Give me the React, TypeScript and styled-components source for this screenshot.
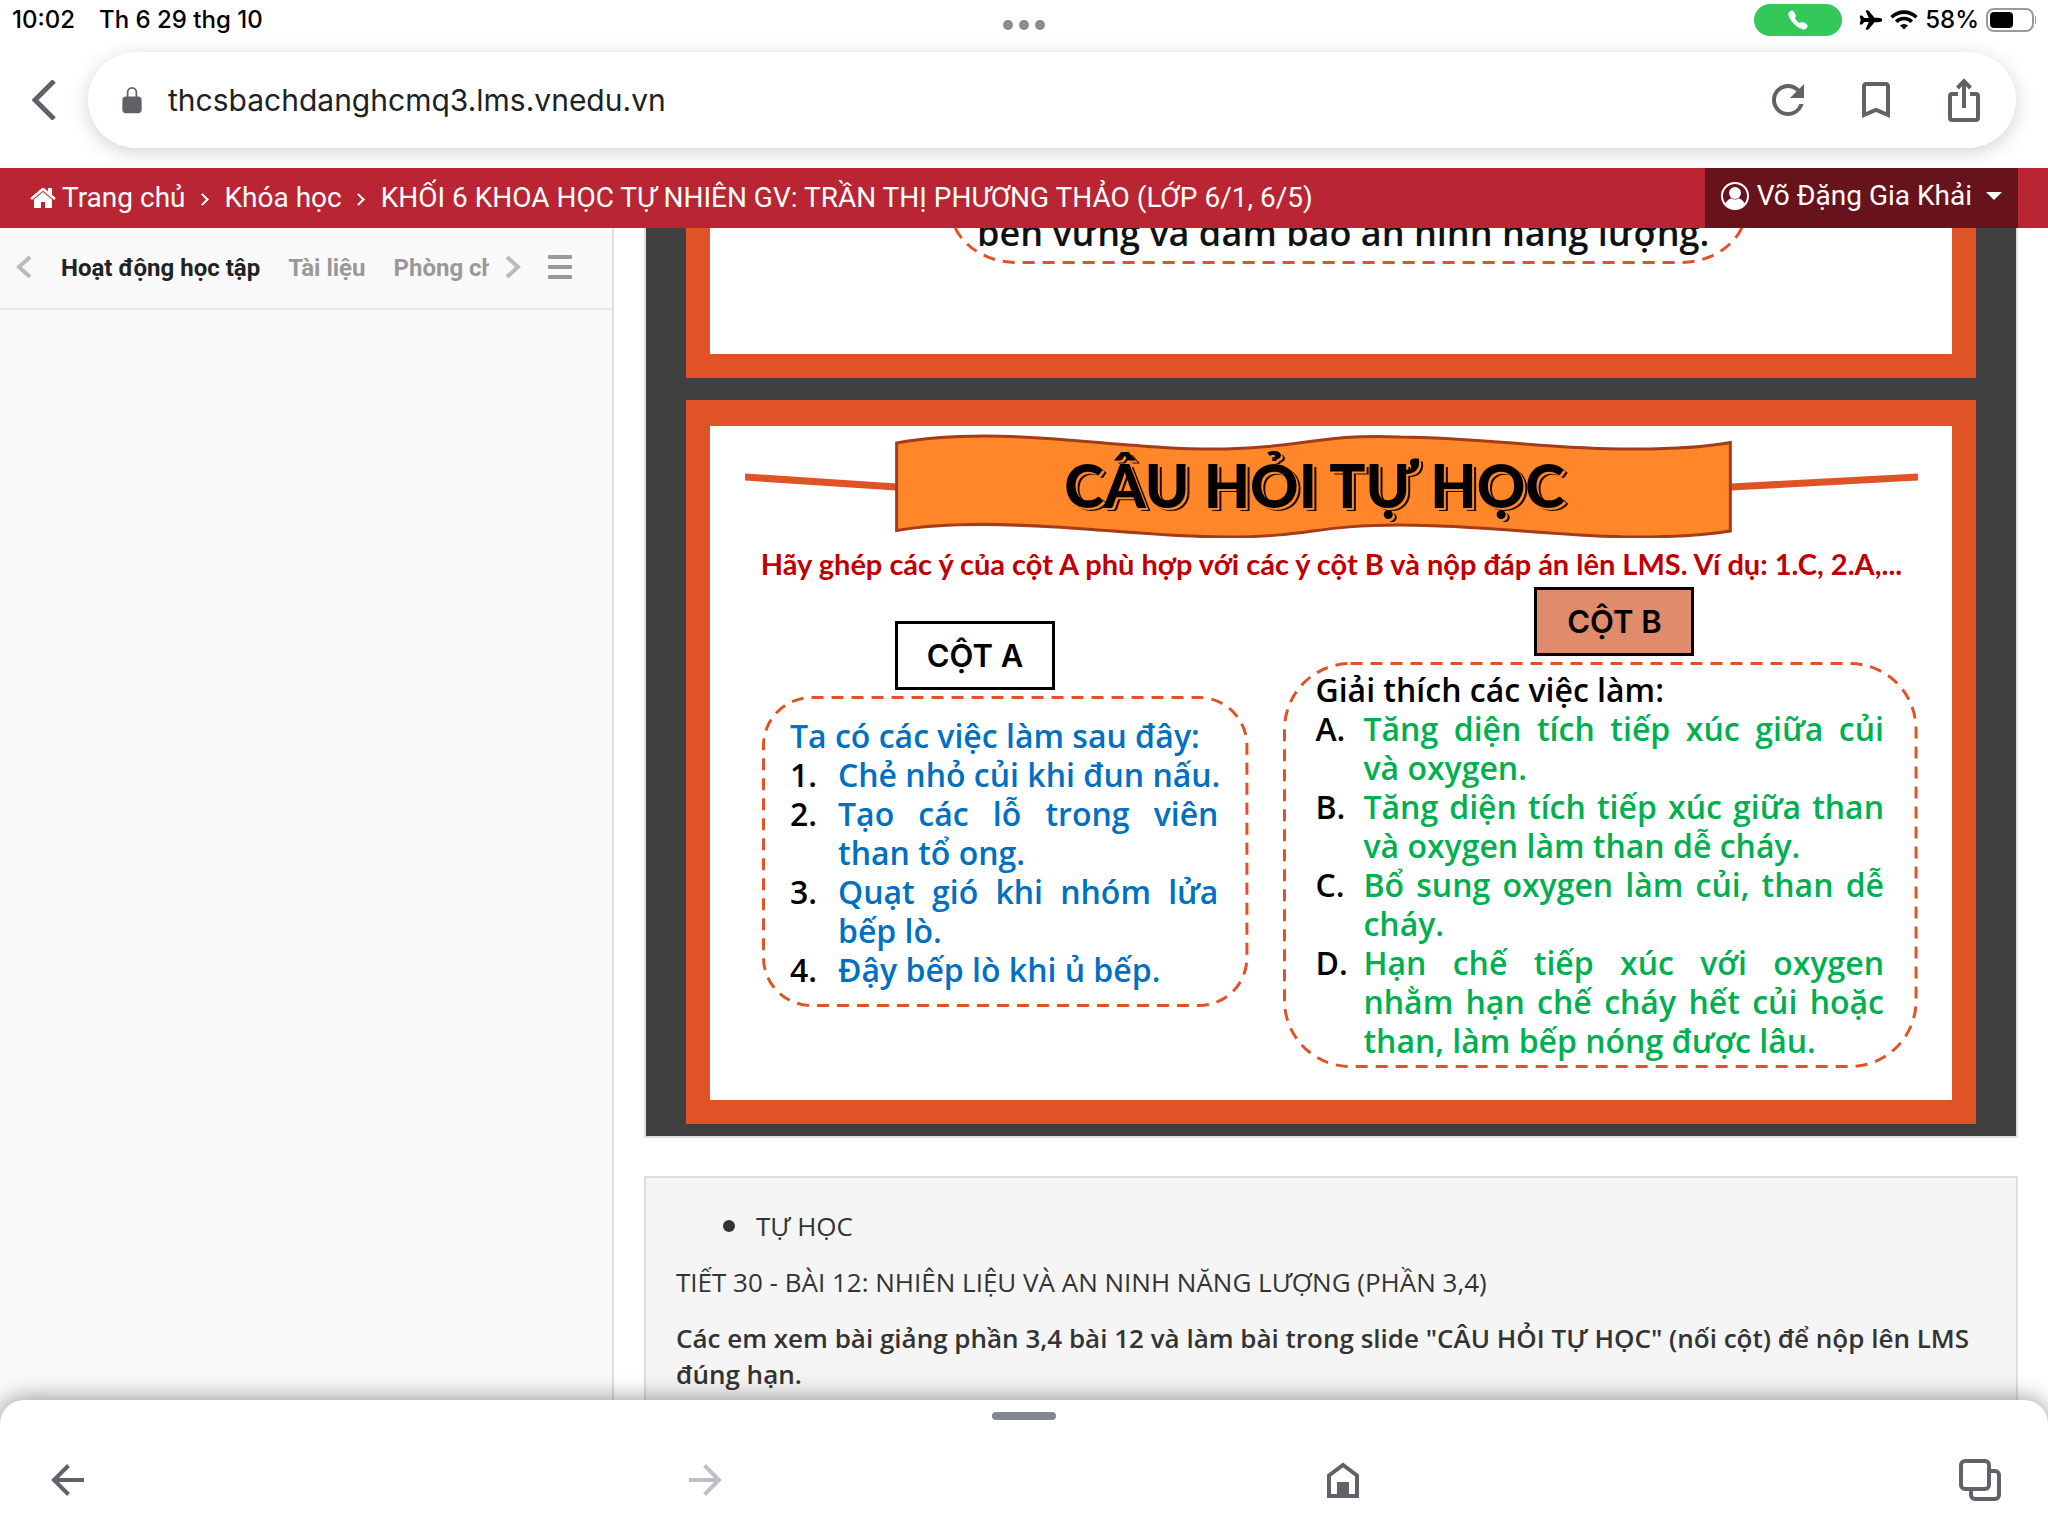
import React from "react";
import styled, { createGlobalStyle } from "styled-components";
import { IoAirplane, IoCall, IoLockClosed } from "react-icons/io5";
import { MdBookmarkBorder, MdRefresh } from "react-icons/md";

const ORANGE = "#e05326";
const SYSTEM_FONT = `Inter, "Liberation Sans", sans-serif`;
const DISPLAY_FONT = `Lato, "Open Sans", sans-serif`;
const TEXT_FONT = `"Open Sans", "Noto Sans", sans-serif`;

const GlobalStyle = createGlobalStyle`
  *, *::before, *::after { box-sizing: border-box; }
  body { margin: 0; background: #fff; font-family: Roboto, "Liberation Sans", sans-serif; }
  button { padding: 0; border: 0; background: none; font: inherit; color: inherit; cursor: pointer; }
  h2, p, ul, ol { margin: 0; padding: 0; }
  ul, ol { list-style: none; }
  svg { display: block; flex: none; }
`;

const Page = styled.div`
  display: flex;
  flex-direction: column;
  height: 100vh;
  overflow: hidden;
`;

/* ---------- status bar ---------- */

const StatusBar = styled.header`
  display: grid;
  grid-template-columns: 1fr auto 1fr;
  align-items: center;
  height: 40px;
  padding: 0 12px;
  font: 500 24px/40px ${SYSTEM_FONT};
  color: #000;
`;

const StatusLeft = styled.div`
  display: flex;
  gap: 24px;
`;

const Dots = styled.button`
  display: flex;
  gap: 6px;
  padding-top: 10px;
`;

const Dot = styled.span`
  width: 10px;
  height: 10px;
  border-radius: 50%;
  background: #8b8b8b;
`;

const StatusRight = styled.div`
  display: flex;
  align-items: center;
  justify-content: flex-end;
  gap: 7px;
`;

const CallPill = styled.span`
  display: grid;
  place-items: center;
  width: 88px;
  height: 32px;
  margin-right: 10px;
  border-radius: 16px;
  background: #34c759;
  color: #fff;
`;

/* ---------- browser toolbar ---------- */

const Toolbar = styled.div`
  display: flex;
  align-items: center;
  height: 128px;
  padding: 0 32px 8px 20px;
  color: #5f6368;
`;

const IconButton = styled.button`
  display: grid;
  place-items: center;
  width: 48px;
  height: 48px;
  color: ${(p: { $muted?: boolean }) => (p.$muted ? "#bdc1c6" : "#5f6368")};
`;

const Omnibox = styled.form`
  display: flex;
  flex: 1;
  align-items: center;
  gap: 22px;
  height: 96px;
  margin-left: 20px;
  padding: 0 28px 0 30px;
  border-radius: 48px;
  background: #fff;
  box-shadow: 0 4px 20px rgba(0, 0, 0, 0.18);
`;

const Address = styled.input`
  flex: 1;
  min-width: 0;
  padding: 0;
  border: 0;
  outline: 0;
  background: none;
  color: #202124;
  font: 400 30px/40px ${SYSTEM_FONT};
`;

const OmniboxActions = styled.div`
  display: flex;
  gap: 40px;
`;

/* ---------- site header ---------- */

const SiteHeader = styled.nav`
  position: relative;
  z-index: 1;
  display: flex;
  flex: none;
  justify-content: space-between;
  height: 60px;
  padding: 0 30px;
  background: #b92532;
  color: #fff;
  font-size: 28px;
  line-height: 58px;
`;

const Crumbs = styled.ol`
  display: flex;
  align-items: center;
`;

const Crumb = styled.li`
  display: flex;
  align-items: center;

  & + &::before {
    content: "";
    width: 9px;
    height: 9px;
    margin: 2px 18px 0 12px;
    border: solid #fff;
    border-width: 2px 2px 0 0;
    transform: rotate(45deg);
  }
`;

const CrumbLink = styled.a`
  display: flex;
  align-items: center;
  gap: 6px;
  color: inherit;
  text-decoration: none;
`;

const UserMenu = styled.button`
  display: flex;
  align-items: center;
  gap: 8px;
  padding: 0 16px 4px;
  background: #68131c;
`;

const Caret = styled.span`
  margin-left: 6px;
  border: 8px solid transparent;
  border-top-color: #fff;
  border-bottom: 0;
`;

/* ---------- page body ---------- */

const Body = styled.div`
  display: flex;
  flex: 1;
  min-height: 0;
`;

const Sidebar = styled.aside`
  flex: none;
  width: 614px;
  border-right: 2px solid #dedede;
  background: #f9f9f9;
`;

const TabBar = styled.div`
  display: flex;
  align-items: center;
  height: 82px;
  padding: 0 40px 2px 16px;
  border-bottom: 2px solid #e8e8e8;
  color: #999;
`;

const Tabs = styled.div`
  display: flex;
  flex: 1;
  gap: 28px;
  min-width: 0;
  margin: 0 16px 0 29px;
  padding-top: 2px;
  overflow: hidden;
`;

const Tab = styled.button`
  flex: none;
  color: ${(p: { $active?: boolean }) => (p.$active ? "#222" : "#999")};
  font-size: 24px;
  font-weight: 700;
  line-height: 40px;
`;

const TabArrow = styled.button`
  flex: none;
  color: #bbb;
`;

const MenuButton = styled.button`
  display: grid;
  gap: 6px;
  width: 24px;
  margin-left: 27px;
`;

const MenuLine = styled.span`
  height: 4px;
  border-radius: 1px;
  background: #999;
`;

const Content = styled.main`
  flex: 1;
  min-width: 0;
  padding: 0 30px;
  overflow: hidden;
`;

/* ---------- slide viewer ---------- */

const Viewer = styled.section`
  display: flex;
  flex-direction: column;
  gap: 22px;
  margin-top: -105px;
  padding: 0 40px 12px;
  border: 2px solid #dedede;
  background: #3f3f3f;
  font-family: ${TEXT_FONT};
`;

const Slide = styled.article`
  border: solid ${ORANGE};
  border-width: 26px 24px 24px;
  background: #fff;
  color: #000;
`;

const PreviousSlide = styled(Slide)`
  display: flex;
  flex-direction: column;
  padding: 0 204px 90px 239px;
`;

const LessonSlide = styled(Slide)`
  padding: 6px 34px 32px 35px;
`;

const Bubble = styled.div`
  position: relative;
  padding: ${(p: { $pad: string; $size?: number }) => p.$pad};
  font-size: ${(p) => p.$size || 32}px;
  font-weight: 600;
  line-height: 39px;
`;

const Outline = styled.svg`
  position: absolute;
  inset: 0;
  width: 100%;
  height: 100%;
  overflow: visible;

  rect {
    width: calc(100% - 3px);
    height: calc(100% - 3px);
    fill: none;
    stroke: ${ORANGE};
    stroke-width: 3;
    stroke-dasharray: 12 8;
  }
`;

const Banner = styled.div`
  display: grid;

  > * {
    grid-area: 1 / 1;
  }
`;

const BannerArt = styled.svg`
  width: 100%;
  height: 106px;
`;

const BannerTitle = styled.h2`
  position: relative;
  padding-right: 34px;
  font-family: ${DISPLAY_FONT};
  font-size: 60px;
  font-weight: 900;
  line-height: 106px;
  text-align: center;
  text-shadow: 2px 2px 0 #ff8629, 4px 3px 0 #1a0a00;
`;

const Instruction = styled.p`
  margin-top: 6px;
  color: #c00000;
  font-family: ${DISPLAY_FONT};
  font-size: 29px;
  font-weight: 700;
  line-height: 40px;
  text-align: center;
  white-space: nowrap;
`;

const Columns = styled.div`
  display: grid;
  grid-template-columns: 486fr 634fr;
  gap: 35px;
  align-items: start;
  padding: 3px 0 0 17px;
`;

const Column = styled.div`
  display: grid;
  gap: 6px;
  padding-top: ${(p: { $drop?: boolean }) => (p.$drop ? "34px" : "0")};
`;

const ColumnLabel = styled.div`
  width: 160px;
  margin-left: ${(p: { $indent: number; $filled?: boolean }) => p.$indent}px;
  border: 3px solid #000;
  background: ${(p) => (p.$filled ? "#e18b6d" : "#fff")};
  font: 600 31px/63px ${SYSTEM_FONT};
  text-align: center;
`;

const Lead = styled.p`
  position: relative;
  color: ${(p: { $color: string }) => p.$color};
  white-space: nowrap;
`;

const Options = styled.ol`
  position: relative;
  color: ${(p: { $color: string }) => p.$color};
`;

const Option = styled.li`
  display: grid;
  grid-template-columns: 48px 1fr;
`;

const Marker = styled.span`
  color: #000;
`;

const OptionText = styled.span`
  min-width: 0;
  text-align: justify;
  white-space: ${(p: { $oneLine: boolean }) => (p.$oneLine ? "nowrap" : "normal")};
`;

/* ---------- description panel ---------- */

const Panel = styled.section`
  display: grid;
  gap: 20px;
  margin-top: 38px;
  padding: 30px;
  height: 400px;
  align-content: start;
  border: 2px solid #dedede;
  background: #f5f5f5;
  color: #333;
  font: 400 26px/36px ${TEXT_FONT};
`;

const Topic = styled.li`
  display: flex;
  align-items: center;
  gap: 21px;
  padding-left: 47px;

  &::before {
    content: "";
    width: 12px;
    height: 12px;
    border-radius: 50%;
    background: #333;
  }
`;

const Strong = styled.strong`
  font-weight: 600;
`;

/* ---------- bottom bar ---------- */

const BottomBar = styled.footer`
  position: relative;
  display: flex;
  flex: none;
  flex-direction: column;
  align-items: center;
  height: 136px;
  margin-top: -24px;
  padding-top: 12px;
  border-radius: 24px 24px 0 0;
  background: #fff;
  box-shadow: 0 0 24px rgba(0, 0, 0, 0.45);
`;

const Handle = styled.span`
  width: 64px;
  height: 8px;
  border-radius: 4px;
  background: #80868b;
`;

const BottomActions = styled.div`
  display: flex;
  justify-content: space-between;
  align-self: stretch;
  padding: 36px 44px 0;
`;

/* ---------- drawings ---------- */

const Wifi = () => (
  <svg width="28" height="20" viewBox="0 0 28 20" fill="none" stroke="#000" strokeWidth="3.6">
    <path d="M1.6 7.2a17.6 17.6 0 0 1 24.8 0" />
    <path d="M6.2 11.8a11 11 0 0 1 15.6 0" />
    <path d="M14 19.6l-4-4a5.7 5.7 0 0 1 8 0z" fill="#000" stroke="none" />
  </svg>
);

const Battery = () => (
  <svg width="50" height="24" viewBox="0 0 50 24">
    <rect x="1" y="1" width="46" height="22" rx="7" fill="none" stroke="#9a9a9a" strokeWidth="2" />
    <rect x="4" y="4" width="23" height="16" rx="4" fill="#000" />
    <path d="M49 8c4 1.500 4 6.500 0 8z" fill="#9a9a9a" />
  </svg>
);

const Chevron = ({ w, h, stroke, flip }: { w: number; h: number; stroke: number; flip?: boolean }) => (
  <svg width={w} height={h} viewBox={`0 0 ${w} ${h}`} fill="none" stroke="currentColor" strokeWidth={stroke}>
    <path d={flip ? `M2 1L${w - 3} ${h / 2}L2 ${h - 1}` : `M${w - 2} 1L3 ${h / 2}L${w - 2} ${h - 1}`} />
  </svg>
);

const Share = () => (
  <svg width="48" height="48" viewBox="0 0 48 48" fill="none" stroke="currentColor" strokeWidth="4">
    <path d="M18 18h-6a2 2 0 0 0-2 2v22a2 2 0 0 0 2 2h24a2 2 0 0 0 2-2V20a2 2 0 0 0-2-2h-6" />
    <path d="M24 32V6M17.500 12L24 5.200 30.500 12" />
  </svg>
);

const House = () => (
  <svg width="26" height="26" viewBox="64 64 1664 1664" fill="currentColor">
    <path d="M1472 992v480q0 26-19 45t-45 19h-384v-384H768v384H384q-26 0-45-19t-19-45V992q0-1 .5-3t.5-3l575-474 575 474q1 2 1 6zm223-69l-62 74q-8 9-21 11h-3q-13 0-21-7L896 424l-692 577q-12 8-24 7-13-2-21-11l-62-74q-8-10-7-23.500T101 878l719-599q32-26 76-26t76 26l244 204V288q0-14 9-23t23-9h192q14 0 23 9t9 23v408l219 182q10 8 11 21.500t-7 23.500z" />
  </svg>
);

const Avatar = () => (
  <svg width="28" height="28" viewBox="0 0 28 28">
    <circle cx="14" cy="14" r="13" fill="none" stroke="#fff" strokeWidth="2" />
    <circle cx="14" cy="11" r="6" fill="#fff" />
    <path d="M4 22c2-4 5-5.500 6.500-5.500 2.200 1.300 4.800 1.300 7 0C19 16.500 22 18 24 22c-5 6-15 6-20 0z" fill="#fff" />
  </svg>
);

const Arrow = ({ forward }: { forward?: boolean }) => (
  <svg width="48" height="48" viewBox="0 0 48 48" fill="none" stroke="currentColor" strokeWidth="4">
    <path d={forward ? "M8 24h29M23.500 9.500L38 24 23.500 38.500" : "M40 24H11M24.500 9.500L10 24l14.500 14.500"} />
  </svg>
);

const HomeOutline = () => (
  <svg width="48" height="48" viewBox="0 0 48 48" fill="none" stroke="currentColor" strokeWidth="4">
    <path d="M10 40V19.500L24 9l14 10.500V40z" />
    <path d="M18 26h12v13H18z" fill="currentColor" stroke="none" />
  </svg>
);

const TabsIcon = () => (
  <svg width="48" height="48" viewBox="0 0 48 48" fill="none" stroke="currentColor" strokeWidth="4">
    <rect x="5" y="5" width="28" height="28" rx="4" />
    <path d="M33 15h6a4 4 0 0 1 4 4v20a4 4 0 0 1-4 4H19a4 4 0 0 1-4-4v-6" />
  </svg>
);

const BannerDrawing = () => (
  <BannerArt viewBox="0 0 1172 106" preserveAspectRatio="none" aria-hidden="true">
    <g stroke={ORANGE} strokeWidth="7">
      <path d="M0 45L151 55" />
      <path d="M985 55L1172 45" />
    </g>
    <path
      d="M151.500 11C195 3 245 2 310 7C375 12 425 18 480 17C565 15 570 2 655 5C740 6 815 18 890 17C925 17 960 15 984.500 10.500V99C960 103 925 105 890 105C815 105 740 93 655 93C570 93 565 105 480 105C425 105 375 99 310 95C245 91 195 91 151.500 98.500Z"
      fill="#ff8629"
      stroke="#a43c1a"
      strokeWidth="3"
    />
  </BannerArt>
);

const DashedOutline = ({ radius }: { radius: number }) => (
  <Outline aria-hidden="true">
    <rect x="1.500" y="1.500" rx={radius} />
  </Outline>
);

/* ---------- content ---------- */

type Item = { marker: string; text: string; oneLine?: boolean };

const columnA: Item[] = [
  { marker: "1.", text: "Chẻ nhỏ củi khi đun nấu.", oneLine: true },
  { marker: "2.", text: "Tạo các lỗ trong viên than tổ ong." },
  { marker: "3.", text: "Quạt gió khi nhóm lửa bếp lò." },
  { marker: "4.", text: "Đậy bếp lò khi ủ bếp.", oneLine: true },
];

const columnB: Item[] = [
  { marker: "A.", text: "Tăng diện tích tiếp xúc giữa củi và oxygen." },
  { marker: "B.", text: "Tăng diện tích tiếp xúc giữa than và oxygen làm than dễ cháy." },
  { marker: "C.", text: "Bổ sung oxygen làm củi, than dễ cháy." },
  { marker: "D.", text: "Hạn chế tiếp xúc với oxygen nhằm hạn chế cháy hết củi hoặc than, làm bếp nóng được lâu." },
];

const OptionList = ({ items, color }: { items: Item[]; color: string }) => (
  <Options $color={color}>
    {items.map(({ marker, text, oneLine = false }) => (
      <Option key={marker}>
        <Marker>{marker}</Marker>
        <OptionText $oneLine={oneLine}>{text}</OptionText>
      </Option>
    ))}
  </Options>
);

export default function App() {
  return (
    <Page>
      <GlobalStyle />
      <StatusBar>
        <StatusLeft>
          <span>10:02</span>
          <span>Th 6 29 thg 10</span>
        </StatusLeft>
        <Dots aria-label="Đa nhiệm">
          <Dot />
          <Dot />
          <Dot />
        </Dots>
        <StatusRight>
          <CallPill>
            <IoCall size={22} />
          </CallPill>
          <IoAirplane size={24} />
          <Wifi />
          <span>58%</span>
          <Battery />
        </StatusRight>
      </StatusBar>

      <Toolbar>
        <IconButton aria-label="Quay lại">
          <Chevron w={24} h={40} stroke={5} />
        </IconButton>
        <Omnibox>
          <IoLockClosed size={28} />
          <Address aria-label="Địa chỉ" defaultValue="thcsbachdanghcmq3.lms.vnedu.vn" />
          <OmniboxActions>
            <IconButton type="button" aria-label="Tải lại">
              <MdRefresh size={48} />
            </IconButton>
            <IconButton type="button" aria-label="Dấu trang">
              <MdBookmarkBorder size={48} />
            </IconButton>
            <IconButton type="button" aria-label="Chia sẻ">
              <Share />
            </IconButton>
          </OmniboxActions>
        </Omnibox>
      </Toolbar>

      <SiteHeader>
        <Crumbs>
          <Crumb>
            <CrumbLink href="#home">
              <House />
              Trang chủ
            </CrumbLink>
          </Crumb>
          <Crumb>
            <CrumbLink href="#courses">Khóa học</CrumbLink>
          </Crumb>
          <Crumb>
            <CrumbLink href="#course">KHỐI 6 KHOA HỌC TỰ NHIÊN GV: TRẦN THỊ PHƯƠNG THẢO (LỚP 6/1, 6/5)</CrumbLink>
          </Crumb>
        </Crumbs>
        <UserMenu>
          <Avatar />
          Võ Đặng Gia Khải
          <Caret />
        </UserMenu>
      </SiteHeader>

      <Body>
        <Sidebar>
          <TabBar>
            <TabArrow aria-label="Thẻ trước">
              <Chevron w={16} h={22} stroke={4} />
            </TabArrow>
            <Tabs>
              <Tab $active>Hoạt động học tập</Tab>
              <Tab>Tài liệu</Tab>
              <Tab>Phòng chat</Tab>
            </Tabs>
            <TabArrow aria-label="Thẻ sau">
              <Chevron w={16} h={22} stroke={4} flip />
            </TabArrow>
            <MenuButton aria-label="Danh sách">
              <MenuLine />
              <MenuLine />
              <MenuLine />
            </MenuButton>
          </TabBar>
        </Sidebar>

        <Content>
          <Viewer>
            <PreviousSlide>
              <Bubble $pad="62px 28px 12px" $size={36}>
                <DashedOutline radius={66} />
                <Lead $color="#111">bền vững và đảm bảo an ninh năng lượng.</Lead>
              </Bubble>
            </PreviousSlide>

            <LessonSlide>
              <Banner>
                <BannerDrawing />
                <BannerTitle>CÂU HỎI TỰ HỌC</BannerTitle>
              </Banner>
              <Instruction>
                Hãy ghép các ý của cột A phù hợp với các ý cột B và nộp đáp án lên LMS. Ví dụ: 1.C, 2.A,...
              </Instruction>
              <Columns>
                <Column $drop>
                  <ColumnLabel $indent={133}>CỘT A</ColumnLabel>
                  <Bubble $pad="20px 30px 18px 28px">
                    <DashedOutline radius={48} />
                    <Lead $color="#0070c0">Ta có các việc làm sau đây:</Lead>
                    <OptionList items={columnA} color="#0070c0" />
                  </Bubble>
                </Column>
                <Column>
                  <ColumnLabel $indent={251} $filled>
                    CỘT B
                  </ColumnLabel>
                  <Bubble $pad="8px 34px 8px 32px">
                    <DashedOutline radius={66} />
                    <Lead $color="#000">Giải thích các việc làm:</Lead>
                    <OptionList items={columnB} color="#00b050" />
                  </Bubble>
                </Column>
              </Columns>
            </LessonSlide>
          </Viewer>

          <Panel>
            <ul>
              <Topic>TỰ HỌC</Topic>
            </ul>
            <p>TIẾT 30 - BÀI 12: NHIÊN LIỆU VÀ AN NINH NĂNG LƯỢNG (PHẦN 3,4)</p>
            <p>
              <Strong>
                Các em xem bài giảng phần 3,4 bài 12 và làm bài trong slide "CÂU HỎI TỰ HỌC" (nối cột) để nộp lên LMS
                đúng hạn.
              </Strong>
            </p>
          </Panel>
        </Content>
      </Body>

      <BottomBar>
        <Handle />
        <BottomActions>
          <IconButton aria-label="Trang trước">
            <Arrow />
          </IconButton>
          <IconButton $muted aria-label="Trang sau">
            <Arrow forward />
          </IconButton>
          <IconButton aria-label="Trang chủ">
            <HomeOutline />
          </IconButton>
          <IconButton aria-label="Các thẻ">
            <TabsIcon />
          </IconButton>
        </BottomActions>
      </BottomBar>
    </Page>
  );
}
